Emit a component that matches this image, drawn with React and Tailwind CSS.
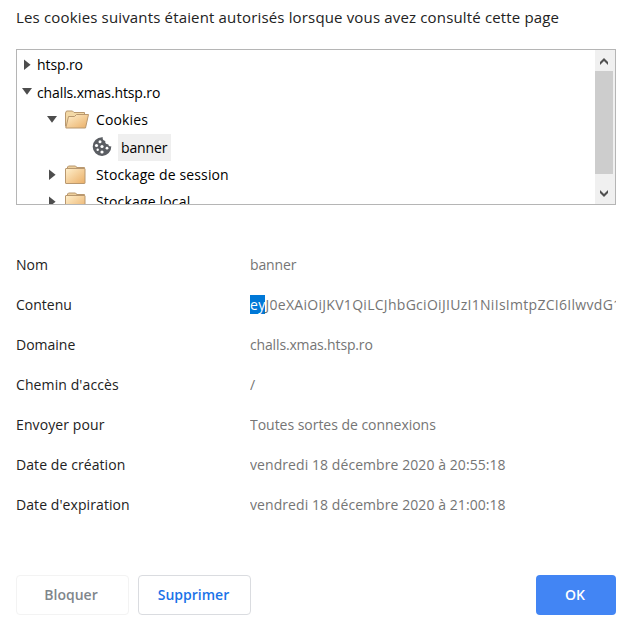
const details = [
  ['Nom', 'banner', 'tracking-normal', 'tracking-[-0.15px]'],
  ['Contenu', null, 'tracking-normal', 'tracking-[0.29px]'],
  ['Domaine', 'challs.xmas.htsp.ro', 'tracking-normal', 'tracking-[-0.15px]'],
  ["Chemin d'accès", '/', 'tracking-[0.1px]', 'tracking-normal'],
  ['Envoyer pour', 'Toutes sortes de connexions', 'tracking-[0.1px]', 'tracking-[-0.03px]'],
  ['Date de création', 'vendredi 18 décembre 2020 à 20:55:18', 'tracking-[0.08px]', 'tracking-[0.07px]'],
  ["Date d'expiration", 'vendredi 18 décembre 2020 à 21:00:18', 'tracking-[0.08px]', 'tracking-[0.07px]'],
];

function Caret({ open }) {
  return (
    <svg className="h-3 w-3 shrink-0" viewBox="0 0 12 12" fill="#4d4d4d">
      {open ? <path d="M1 2h10L6 8.700z" /> : <path d="M3 .5v10.500l6.600-5.250z" />}
    </svg>
  );
}

function Folder({ open }) {
  return (
    <svg className="h-6 w-6 shrink-0" viewBox="0 0 24 24" strokeWidth="1" stroke="#b9986f">
      <defs>
        <linearGradient id="folderFill" x1="0" y1="0" x2="1" y2="1">
          <stop offset="0" stopColor="#fff0cd" />
          <stop offset="1" stopColor="#eaae66" />
        </linearGradient>
      </defs>
      {open ? (
        <>
          <path d="M.5 18.500V5l1-2h6l1.500 1.500h10.500v4" fill="#f3d9a6" />
          <path d="M3.500 8.500h6l2-2h12L20.500 20H.8z" fill="url(#folderFill)" />
        </>
      ) : (
        <>
          <path d="M2.500 6V4l1-1h7l1 1v.5h8v3h-17z" fill="#edcf9c" />
          <rect x=".5" y="5.500" width="19.500" height="15" rx=".5" fill="url(#folderFill)" />
        </>
      )}
    </svg>
  );
}

function Cookie() {
  return (
    <svg className="h-5 w-5 shrink-0" viewBox="0 0 20 20">
      <path d="M10 .3a9.300 9.300 0 1 0 9.300 9c-1.700.500-2.900-.300-3-2-2.200.300-3.500-1.300-3-3.200C11.300 3.700 10.300 2.300 10.800.3z" fill="#5b5e63" />
      <g fill="#fff">
        <circle cx="8" cy="4.700" r="1.500" />
        <circle cx="4.500" cy="8.500" r="1.600" />
        <circle cx="10" cy="9.500" r="1.600" />
        <circle cx="15" cy="11.200" r="1.400" />
        <circle cx="5.700" cy="12.800" r="1.200" />
        <circle cx="10" cy="15" r="1.600" />
      </g>
    </svg>
  );
}

export default function App() {
  return (
    <main className="flex h-[622px] w-[630px] flex-col overflow-hidden bg-white px-4 pr-[14px] font-['Open_Sans',sans-serif] text-sm text-[#222]">
      <h1 className="mt-[7px] h-[42px] whitespace-nowrap text-[15px] leading-5 tracking-[0.16px]">
        Les cookies suivants étaient autorisés lorsque vous avez consulté cette page
      </h1>

      <section className="flex h-[156px] shrink-0 border border-[#b5b5b5] text-black">
        <ul className="flex-1 overflow-hidden whitespace-nowrap pt-px">
          <li className="flex h-[27.500px] items-center pl-1">
            <Caret />
            <span className="ml-1 tracking-[-0.1px]">htsp.ro</span>
          </li>
          <li className="flex h-[27.500px] items-center pl-1">
            <Caret open />
            <span className="ml-1 pt-px tracking-[-0.12px]">challs.xmas.htsp.ro</span>
          </li>
          <li className="flex h-[27.500px] items-center pl-[29px]">
            <Caret open />
            <span className="ml-[7px] flex"><Folder open /></span>
            <span className="ml-[7px] tracking-[0.14px]">Cookies</span>
          </li>
          <li className="flex h-[27.500px] items-center pl-[75px]">
            <Cookie />
            <span className="ml-[6px] flex h-[27px] w-[53px] items-center bg-[#efefef] pl-[3px] pt-px tracking-[-0.15px]">banner</span>
          </li>
          <li className="flex h-[27.500px] items-center pl-[29px]">
            <Caret />
            <span className="ml-[7px] flex"><Folder /></span>
            <span className="ml-[7px] tracking-[0.12px]">Stockage de session</span>
          </li>
          <li className="flex h-[27.500px] items-center pl-[29px]">
            <Caret />
            <span className="ml-[7px] flex"><Folder /></span>
            <span className="ml-[7px] tracking-[0.17px]">Stockage local</span>
          </li>
        </ul>
        <div className="flex w-5 flex-col bg-[#f0f0f0]">
          <svg className="h-[21px] w-[18px]" viewBox="0 0 18 21" fill="#505050">
            <path d="M5 15v-3l4-4 4 4v3l-4-4z" />
          </svg>
          <div className="h-[103px] w-[18px] bg-[#cdcdcd]" />
          <svg className="mt-[9px] h-[21px] w-[18px]" viewBox="0 0 18 21" fill="#505050">
            <path d="M5 7v3l4 4 4-4V7l-4 4z" />
          </svg>
        </div>
      </section>

      <dl className="mt-10">
        {details.map(([label, value, labelTracking, valueTracking]) => (
          <div key={label} className="flex h-10 items-center whitespace-nowrap">
            <dt className={`w-[234px] shrink-0 ${labelTracking}`}>{label}</dt>
            <dd className={`w-[366px] overflow-hidden text-[#757575] ${valueTracking}`}>
              {value ?? (
                <>
                  <span className="bg-[#0078d7] text-white">ey</span>
                  J0eXAiOiJKV1QiLCJhbGciOiJIUzI1NiIsImtpZCI6IlwvdG1w
                </>
              )}
            </dd>
          </div>
        ))}
      </dl>

      <footer className="mt-[50px] flex font-semibold">
        <button className="h-10 w-[113px] rounded border border-[#f3f3f3] pr-[3px] text-[#80868b]">Bloquer</button>
        <button className="ml-[9px] h-10 w-[113px] rounded border border-[#dadce0] pr-[2px] text-[#1a73e8]">Supprimer</button>
        <button className="ml-auto h-10 w-20 rounded bg-[#4285f4] pr-[2px] text-white">OK</button>
      </footer>
    </main>
  );
}
